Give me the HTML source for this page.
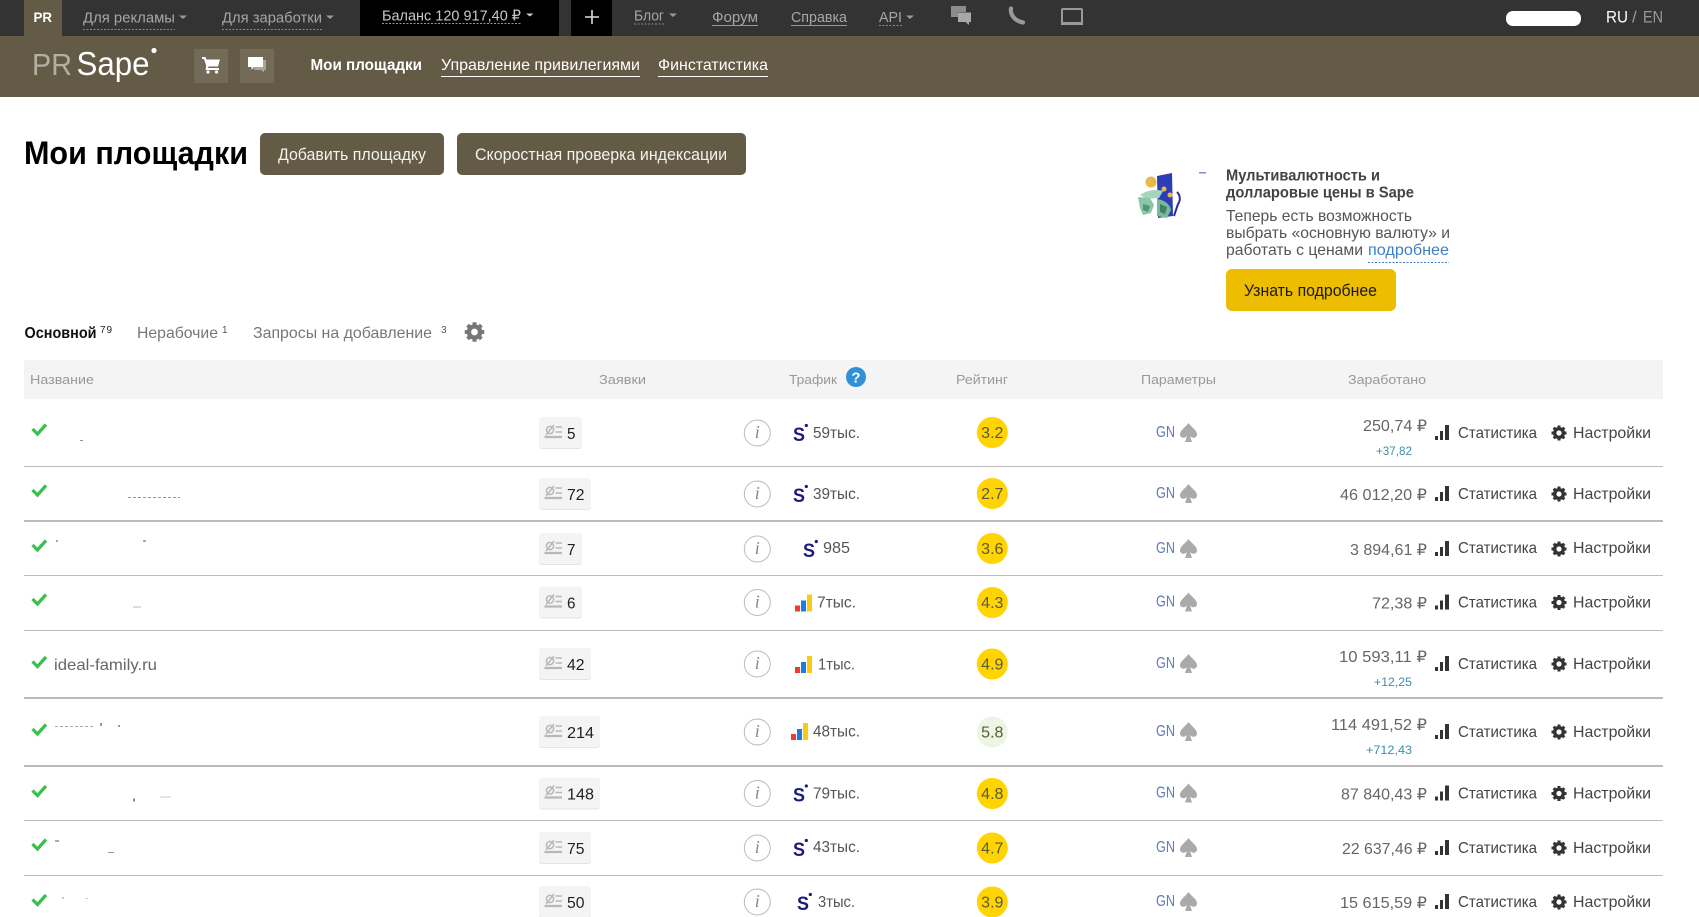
<!DOCTYPE html>
<html lang="ru"><head><meta charset="utf-8"><title>Мои площадки</title>
<style>
html,body{margin:0;padding:0;background:#fff;overflow:hidden}
svg{display:block}
text{font-family:"Liberation Sans","DejaVu Sans",sans-serif}
.n{font-size:15px;fill:#a6a6a6}
.nv{font-size:16px;fill:#fff}
.h{font-size:13px;fill:#999}
.t{font-size:16px;fill:#555}
.e{font-size:16px;fill:#666}
.a{font-size:16px;fill:#444}
.c{font-size:16px;fill:#222}
.g{font-size:16px;fill:#5f7cb8}
.r{font-size:16px;fill:#5a5a3c;text-anchor:middle}
.p{font-size:12px;fill:#3a8fa8}
.s{font-size:19px;font-weight:700;fill:#1b1a7a}
.i{font-size:18px;font-style:italic;fill:#888;font-family:"Liberation Serif",serif;text-anchor:middle}
</style></head><body>
<svg xmlns="http://www.w3.org/2000/svg" width="1699" height="917" viewBox="0 0 1699 917">
<defs>
<g id="chk"><path d="M32.500 6 L37.500 11 L46 1.500" fill="none" stroke="#38c04c" stroke-width="3.200"/></g>
<g id="req" fill="none" stroke="#b8b8b8"><circle cx="550" cy="-3" r="3.600" stroke-width="1.500"/><path d="M546 2 L554 -8" stroke-width="1.500"/><path d="M555.500 -6H562M555.500 -1H562" stroke-width="1.600"/><path d="M544.500 4H562" stroke-width="2.200"/></g>
<g id="inf"><circle cx="757.300" cy="0" r="13" fill="#fff" stroke="#bbb" stroke-width="1"/></g>
<path id="spd" d="M1188.500 -10 C1192 -5 1197 -3 1197 1.500 C1197 5 1192.500 6 1190 3 L1192 9 H1185 L1187 3 C1184.500 6 1180 5 1180 1.500 C1180 -3 1185 -5 1188.500 -10Z" fill="#aaa"/>
<g id="bar" fill="#333"><rect x="1435" y="3" width="3" height="4"/><rect x="1440" y="-2" width="3" height="9"/><rect x="1445" y="-8" width="4" height="15"/></g>
<g id="gr"><circle cx="0" cy="0" r="4.400" fill="none" stroke="#333" stroke-width="3.200"/><g fill="#333"><rect x="-1.500" y="-7.500" width="3" height="15"/><rect x="-1.500" y="-7.500" width="3" height="15" transform="rotate(45)"/><rect x="-1.500" y="-7.500" width="3" height="15" transform="rotate(90)"/><rect x="-1.500" y="-7.500" width="3" height="15" transform="rotate(135)"/></g><circle cx="0" cy="0" r="2.600" fill="#fff"/></g>
<g id="ya"><rect x="0" y="11" width="5" height="6" fill="#ef3b35"/><rect x="6" y="6" width="5" height="11" fill="#1f7be0"/><rect x="12" y="0" width="5" height="17" fill="#fdc912"/></g>
</defs>

<!-- top bar -->
<rect x="0" y="0" width="1699" height="36" fill="#333"/>
<rect x="0" y="36" width="1699" height="61" fill="#635b45"/>
<rect x="24" y="0" width="38" height="36" fill="#635b45"/>
<text x="33.500" y="22" font-size="14" font-weight="700" fill="#fff" textLength="18.500" lengthAdjust="spacingAndGlyphs">PR</text>
<text class="n" x="83" y="22.500" textLength="92" lengthAdjust="spacingAndGlyphs">Для рекламы</text>
<path d="M83 29.500H175" stroke="#888" stroke-dasharray="2 1.500"/>
<path d="M179 15.500h8l-4 3.500z" fill="#999"/>
<text class="n" x="222" y="22.500" textLength="100" lengthAdjust="spacingAndGlyphs">Для заработки</text>
<path d="M222 29.500H322" stroke="#888" stroke-dasharray="2 1.500"/>
<path d="M326 15.500h8l-4 3.500z" fill="#999"/>
<rect x="360" y="0" width="199" height="36" fill="#000"/>
<text x="382" y="20.500" font-size="15" fill="#c8c8c8" textLength="139" lengthAdjust="spacingAndGlyphs">Баланс 120 917,40 ₽</text>
<path d="M382 23.500H521" stroke="#999" stroke-dasharray="2 1.500"/>
<path d="M526 13.500h7.500l-3.700 3z" fill="#ccc"/>
<rect x="571" y="0" width="41" height="36" fill="#000"/>
<path d="M592 10V24M585 17H599" stroke="#ddd" stroke-width="1.600"/>
<text class="n" x="634" y="20.500" textLength="30" lengthAdjust="spacingAndGlyphs">Блог</text>
<path d="M634 24H664" stroke="#888" stroke-dasharray="2 1.500"/>
<path d="M669 13.500h8l-4 3.500z" fill="#999"/>
<text class="n" x="712" y="22" textLength="46" lengthAdjust="spacingAndGlyphs">Форум</text>
<path d="M712 25.500H758" stroke="#999"/>
<text class="n" x="791" y="22" textLength="56" lengthAdjust="spacingAndGlyphs">Справка</text>
<path d="M791 25.500H847" stroke="#999"/>
<text class="n" x="879" y="22" textLength="23" lengthAdjust="spacingAndGlyphs">API</text>
<path d="M879 25.500H902" stroke="#888" stroke-dasharray="2 1.500"/>
<path d="M906 15.500h8l-4 3.500z" fill="#999"/>
<path d="M951 6H966V12H958V17H951Z" fill="#8c8c8c"/>
<path d="M958 12.500H971V22H969V25L965.500 22H958Z" fill="#a8a8a8"/>
<path d="M1011 8.500C1010 15 1015 21 1023 22.500" fill="none" stroke="#999" stroke-width="4.200" stroke-linecap="round"/>
<rect x="1062" y="9" width="20" height="15" rx="1" fill="none" stroke="#999" stroke-width="2"/>
<rect x="1061" y="22" width="22" height="3" fill="#999"/>
<rect x="1506" y="11" width="75" height="15" rx="7" fill="#fff"/>
<text x="1606" y="22.500" font-size="17" fill="#fff" textLength="22" lengthAdjust="spacingAndGlyphs">RU</text>
<text x="1632" y="22.500" font-size="17" fill="#999" textLength="7">/</text>
<text x="1643" y="22.500" font-size="17" fill="#999" textLength="20" lengthAdjust="spacingAndGlyphs">EN</text>

<!-- brand bar -->
<text x="32" y="75" font-size="31" fill="#b2afa3" textLength="40" lengthAdjust="spacingAndGlyphs">PR</text>
<text x="76.500" y="75" font-size="33" fill="#fff" textLength="73" lengthAdjust="spacingAndGlyphs">Sape</text>
<circle cx="154" cy="50.500" r="2.600" fill="#fff"/>
<rect x="194" y="49" width="34" height="34" fill="#736b58"/>
<rect x="240" y="49" width="34" height="34" fill="#736b58"/>
<path d="M202 57H205.500L206.300 59.500H220L218 66.500H208.500L208 68H219V70H205.500L206.300 66L204 59H202Z" fill="#fff"/>
<circle cx="208" cy="72" r="1.600" fill="#fff"/><circle cx="216.500" cy="72" r="1.600" fill="#fff"/>
<path d="M254 60H266V70H264V72.500L261 70H254Z" fill="#a9a598"/>
<path d="M248 57H263V67H254L251.500 70V67H248Z" fill="#fff"/>
<text class="nv" x="310.500" y="70" font-weight="700" textLength="111.500" lengthAdjust="spacingAndGlyphs">Мои площадки</text>
<text class="nv" x="441" y="70" textLength="199" lengthAdjust="spacingAndGlyphs">Управление привилегиями</text>
<path d="M441 76.500H640" stroke="#fff"/>
<text class="nv" x="658" y="70" textLength="110" lengthAdjust="spacingAndGlyphs">Финстатистика</text>
<path d="M658 76.500H768" stroke="#fff"/>

<!-- heading -->
<text x="24" y="164" font-size="32" font-weight="700" fill="#000" textLength="224" lengthAdjust="spacingAndGlyphs">Мои площадки</text>
<rect x="260" y="133" width="184" height="42" rx="5" fill="#635b45"/>
<text x="278" y="160" font-size="17" fill="#f4f2ec" textLength="148" lengthAdjust="spacingAndGlyphs">Добавить площадку</text>
<rect x="457" y="133" width="289" height="42" rx="5" fill="#635b45"/>
<text x="475" y="160" font-size="17" fill="#f4f2ec" textLength="252" lengthAdjust="spacingAndGlyphs">Скоростная проверка индексации</text>

<!-- promo -->
<path d="M1157 176L1172 173L1173 216L1158 218Z" fill="#2c3db8"/>
<circle cx="1151" cy="182" r="5.500" fill="#e9b948"/>
<circle cx="1164" cy="189" r="2.500" fill="#e9b948"/><circle cx="1170" cy="195" r="2.500" fill="#e9b948"/>
<path d="M1140 195C1147 190 1156 189 1163 191L1159 198L1147 199Z" fill="#a6d5be"/>
<path d="M1138 197L1150 198L1154 205L1151 213L1143 215L1140 208Z" fill="#8cc6aa"/>
<path d="M1143 204L1150 206L1148 212L1143 210Z" fill="#4f9478"/>
<path d="M1157 199C1164 200 1170 204 1171 210L1167 218L1157 216Z" fill="#79b89b"/>
<path d="M1160 204L1167 207L1165 214L1160 212Z" fill="#3f8066"/>
<path d="M1177 192C1180 195 1181 200 1178 204L1174 216" fill="none" stroke="#2a2f9a" stroke-width="2"/>
<rect x="1199" y="172" width="7" height="1.500" fill="#8a8fc0"/>
<text x="1226" y="180.500" font-size="16" font-weight="700" fill="#444" textLength="154" lengthAdjust="spacingAndGlyphs">Мультивалютность и</text>
<text x="1226" y="197.500" font-size="16" font-weight="700" fill="#444" textLength="188" lengthAdjust="spacingAndGlyphs">долларовые цены в Sape</text>
<text x="1226" y="221" font-size="16" fill="#555" textLength="186" lengthAdjust="spacingAndGlyphs">Теперь есть возможность</text>
<text x="1226" y="238" font-size="16" fill="#555" textLength="224" lengthAdjust="spacingAndGlyphs">выбрать «основную валюту» и</text>
<text x="1226" y="255" font-size="16" fill="#555" textLength="137" lengthAdjust="spacingAndGlyphs">работать с ценами</text>
<text x="1368" y="255" font-size="16" fill="#3d7fc4" textLength="81" lengthAdjust="spacingAndGlyphs">подробнее</text>
<path d="M1368 262.500H1449" stroke="#3d7fc4" stroke-dasharray="2 1.500"/>
<rect x="1226" y="269" width="170" height="42" rx="6" fill="#ecbd00"/>
<text x="1244" y="296" font-size="17" fill="#1c1a10" textLength="133" lengthAdjust="spacingAndGlyphs">Узнать подробнее</text>

<!-- tabs -->
<text x="24.500" y="338" font-size="16" font-weight="700" fill="#111" textLength="72" lengthAdjust="spacingAndGlyphs">Основной</text>
<text x="100" y="333" font-size="10" fill="#222" textLength="12">79</text>
<text x="137" y="338" font-size="16" fill="#777" textLength="81" lengthAdjust="spacingAndGlyphs">Нерабочие</text>
<text x="222" y="333" font-size="10" fill="#555">1</text>
<text x="253" y="338" font-size="16" fill="#777" textLength="179" lengthAdjust="spacingAndGlyphs">Запросы на добавление</text>
<text x="441" y="333" font-size="10" fill="#555">3</text>
<g transform="translate(474.500,332) scale(1.300)"><circle r="4.400" fill="none" stroke="#777" stroke-width="3.200"/><g fill="#777"><rect x="-1.500" y="-7.500" width="3" height="15"/><rect x="-1.500" y="-7.500" width="3" height="15" transform="rotate(45)"/><rect x="-1.500" y="-7.500" width="3" height="15" transform="rotate(90)"/><rect x="-1.500" y="-7.500" width="3" height="15" transform="rotate(135)"/></g><circle r="2.600" fill="#fff"/></g>

<!-- table head -->
<rect x="24" y="360" width="1639" height="39" fill="#f4f4f4"/>
<text class="h" x="30" y="384" textLength="64" lengthAdjust="spacingAndGlyphs">Название</text>
<text class="h" x="599" y="384" textLength="47" lengthAdjust="spacingAndGlyphs">Заявки</text>
<text class="h" x="789" y="384" textLength="48" lengthAdjust="spacingAndGlyphs">Трафик</text>
<circle cx="856" cy="377" r="10" fill="#3290d6"/>
<text x="856" y="382.500" font-size="15" font-weight="700" fill="#fff" text-anchor="middle">?</text>
<text class="h" x="956" y="384" textLength="52" lengthAdjust="spacingAndGlyphs">Рейтинг</text>
<text class="h" x="1141" y="384" textLength="75" lengthAdjust="spacingAndGlyphs">Параметры</text>
<text class="h" x="1348" y="384" textLength="78" lengthAdjust="spacingAndGlyphs">Заработано</text>

<!-- separators -->
<g fill="#bbb">
<rect x="24" y="466" width="1639" height="1"/>
<rect x="24" y="520" width="1639" height="2"/>
<rect x="24" y="575" width="1639" height="1"/>
<rect x="24" y="630" width="1639" height="1"/>
<rect x="24" y="697" width="1639" height="2"/>
<rect x="24" y="765" width="1639" height="2"/>
<rect x="24" y="820" width="1639" height="1"/>
<rect x="24" y="875" width="1639" height="1"/>
</g>

<!-- row 1 -->
<g transform="translate(0,433)">
<use href="#chk" y="-10"/><rect x="80" y="7" width="3" height="1" fill="#999"/>
<rect x="539" y="-15" width="43" height="31" rx="3" fill="#e4e4e4"/><rect x="539" y="-16" width="43" height="31" rx="3" fill="#f4f4f4"/><use href="#req"/>
<text class="c" x="567" y="6" textLength="8.500" lengthAdjust="spacingAndGlyphs">5</text>
<use href="#inf"/><text class="i" x="757.300" y="5">i</text>
<text class="s" x="793" y="8" textLength="12" lengthAdjust="spacingAndGlyphs">S</text><circle cx="806.300" cy="-7.500" r="1.600" fill="#1b1a7a"/>
<text class="t" x="813" y="5" textLength="47" lengthAdjust="spacingAndGlyphs">59тыс.</text>
<circle cx="992.300" cy="-.5" r="15.500" fill="#ffd400"/><text class="r" x="992.300" y="5">3.2</text>
<text class="g" x="1156" y="4" textLength="19" lengthAdjust="spacingAndGlyphs">GN</text><use href="#spd"/>
<text class="e" x="1363" y="-2" textLength="64" lengthAdjust="spacingAndGlyphs">250,74 ₽</text>
<text class="p" x="1376" y="22" textLength="36" lengthAdjust="spacingAndGlyphs">+37,82</text>
<use href="#bar"/><text class="a" x="1458" y="5" textLength="79" lengthAdjust="spacingAndGlyphs">Статистика</text>
<use href="#gr" x="1559"/><text class="a" x="1573" y="5" textLength="78" lengthAdjust="spacingAndGlyphs">Настройки</text>
</g>
<!-- row 2 -->
<g transform="translate(0,494)">
<use href="#chk" y="-10"/><path d="M128 3.500H180" stroke="#999" stroke-dasharray="3 2"/>
<rect x="539" y="-15" width="52" height="31" rx="3" fill="#e4e4e4"/><rect x="539" y="-16" width="52" height="31" rx="3" fill="#f4f4f4"/><use href="#req"/>
<text class="c" x="567" y="6" textLength="17.500" lengthAdjust="spacingAndGlyphs">72</text>
<use href="#inf"/><text class="i" x="757.300" y="5">i</text>
<text class="s" x="793" y="8" textLength="12" lengthAdjust="spacingAndGlyphs">S</text><circle cx="806.300" cy="-7.500" r="1.600" fill="#1b1a7a"/>
<text class="t" x="813" y="5" textLength="47" lengthAdjust="spacingAndGlyphs">39тыс.</text>
<circle cx="992.300" cy="-.5" r="15.500" fill="#ffd400"/><text class="r" x="992.300" y="5">2.7</text>
<text class="g" x="1156" y="4" textLength="19" lengthAdjust="spacingAndGlyphs">GN</text><use href="#spd"/>
<text class="e" x="1340" y="6" textLength="87" lengthAdjust="spacingAndGlyphs">46 012,20 ₽</text>
<use href="#bar"/><text class="a" x="1458" y="5" textLength="79" lengthAdjust="spacingAndGlyphs">Статистика</text>
<use href="#gr" x="1559"/><text class="a" x="1573" y="5" textLength="78" lengthAdjust="spacingAndGlyphs">Настройки</text>
</g>
<!-- row 3 -->
<g transform="translate(0,549)">
<use href="#chk" y="-10"/><rect x="56" y="-9" width="2" height="2" fill="#aaa"/><rect x="143" y="-9" width="3" height="2" fill="#aaa"/>
<rect x="539" y="-15" width="43" height="31" rx="3" fill="#e4e4e4"/><rect x="539" y="-16" width="43" height="31" rx="3" fill="#f4f4f4"/><use href="#req"/>
<text class="c" x="567" y="6" textLength="8.500" lengthAdjust="spacingAndGlyphs">7</text>
<use href="#inf"/><text class="i" x="757.300" y="5">i</text>
<text class="s" x="803" y="8" textLength="12" lengthAdjust="spacingAndGlyphs">S</text><circle cx="816.300" cy="-7.500" r="1.600" fill="#1b1a7a"/>
<text class="t" x="823" y="4" textLength="27" lengthAdjust="spacingAndGlyphs">985</text>
<circle cx="992.300" cy="-.5" r="15.500" fill="#ffd400"/><text class="r" x="992.300" y="5">3.6</text>
<text class="g" x="1156" y="4" textLength="19" lengthAdjust="spacingAndGlyphs">GN</text><use href="#spd"/>
<text class="e" x="1350" y="6" textLength="77" lengthAdjust="spacingAndGlyphs">3 894,61 ₽</text>
<use href="#bar"/><text class="a" x="1458" y="4" textLength="79" lengthAdjust="spacingAndGlyphs">Статистика</text>
<use href="#gr" x="1559"/><text class="a" x="1573" y="4" textLength="78" lengthAdjust="spacingAndGlyphs">Настройки</text>
</g>
<!-- row 4 -->
<g transform="translate(0,602.500)">
<use href="#chk" y="-9.500"/><rect x="133" y="4" width="8" height="1" fill="#bbb"/>
<rect x="539" y="-15" width="43" height="31" rx="3" fill="#e4e4e4"/><rect x="539" y="-16" width="43" height="31" rx="3" fill="#f4f4f4"/><use href="#req"/>
<text class="c" x="567" y="6" textLength="8.500" lengthAdjust="spacingAndGlyphs">6</text>
<use href="#inf"/><text class="i" x="757.300" y="5">i</text>
<use href="#ya" x="795" y="-8"/>
<text class="t" x="817" y="5" textLength="39" lengthAdjust="spacingAndGlyphs">7тыс.</text>
<circle cx="992.300" r="15.500" fill="#ffd400"/><text class="r" x="992.300" y="5.500">4.3</text>
<text class="g" x="1156" y="4" textLength="19" lengthAdjust="spacingAndGlyphs">GN</text><use href="#spd"/>
<text class="e" x="1372" y="6" textLength="55" lengthAdjust="spacingAndGlyphs">72,38 ₽</text>
<use href="#bar"/><text class="a" x="1458" y="5" textLength="79" lengthAdjust="spacingAndGlyphs">Статистика</text>
<use href="#gr" x="1559"/><text class="a" x="1573" y="5" textLength="78" lengthAdjust="spacingAndGlyphs">Настройки</text>
</g>
<!-- row 5 -->
<g transform="translate(0,664)">
<use href="#chk" y="-8.500"/>
<text x="54" y="6" font-size="16" fill="#666" textLength="103" lengthAdjust="spacingAndGlyphs">ideal-family.ru</text>
<rect x="539" y="-15" width="52" height="31" rx="3" fill="#e4e4e4"/><rect x="539" y="-16" width="52" height="31" rx="3" fill="#f4f4f4"/><use href="#req"/>
<text class="c" x="567" y="6" textLength="17.500" lengthAdjust="spacingAndGlyphs">42</text>
<use href="#inf"/><text class="i" x="757.300" y="5">i</text>
<use href="#ya" x="795" y="-8"/>
<text class="t" x="818" y="5.500" textLength="37" lengthAdjust="spacingAndGlyphs">1тыс.</text>
<circle cx="992.300" r="15.500" fill="#ffd400"/><text class="r" x="992.300" y="5.500">4.9</text>
<text class="g" x="1156" y="4" textLength="19" lengthAdjust="spacingAndGlyphs">GN</text><use href="#spd"/>
<text class="e" x="1339" y="-2" textLength="88" lengthAdjust="spacingAndGlyphs">10 593,11 ₽</text>
<text class="p" x="1374" y="22" textLength="38" lengthAdjust="spacingAndGlyphs">+12,25</text>
<use href="#bar"/><text class="a" x="1458" y="5" textLength="79" lengthAdjust="spacingAndGlyphs">Статистика</text>
<use href="#gr" x="1559"/><text class="a" x="1573" y="5" textLength="78" lengthAdjust="spacingAndGlyphs">Настройки</text>
</g>
<!-- row 6 -->
<g transform="translate(0,732)">
<use href="#chk" y="-9"/><path d="M55 -5.500H93" stroke="#aaa" stroke-dasharray="3 2"/><rect x="100" y="-9" width="2" height="3" fill="#999"/><rect x="118" y="-7" width="2" height="2" fill="#999"/>
<rect x="539" y="-15" width="61" height="31" rx="3" fill="#e4e4e4"/><rect x="539" y="-16" width="61" height="31" rx="3" fill="#f4f4f4"/><use href="#req"/>
<text class="c" x="567" y="6" textLength="27" lengthAdjust="spacingAndGlyphs">214</text>
<use href="#inf"/><text class="i" x="757.300" y="5">i</text>
<use href="#ya" x="791" y="-9"/>
<text class="t" x="813" y="4.500" textLength="47" lengthAdjust="spacingAndGlyphs">48тыс.</text>
<circle cx="992.300" r="15.500" fill="#ecf6e2"/><text class="r" x="992.300" y="5.500">5.8</text>
<text class="g" x="1156" y="4" textLength="19" lengthAdjust="spacingAndGlyphs">GN</text><use href="#spd"/>
<text class="e" x="1331" y="-2" textLength="96" lengthAdjust="spacingAndGlyphs">114 491,52 ₽</text>
<text class="p" x="1366" y="22" textLength="46" lengthAdjust="spacingAndGlyphs">+712,43</text>
<use href="#bar"/><text class="a" x="1458" y="5" textLength="79" lengthAdjust="spacingAndGlyphs">Статистика</text>
<use href="#gr" x="1559"/><text class="a" x="1573" y="5" textLength="78" lengthAdjust="spacingAndGlyphs">Настройки</text>
</g>
<!-- row 7 -->
<g transform="translate(0,793.500)">
<use href="#chk" y="-9"/><rect x="133" y="5" width="2" height="3" fill="#888"/><rect x="160" y="3" width="11" height="1" fill="#ccc"/>
<rect x="539" y="-15" width="61" height="31" rx="3" fill="#e4e4e4"/><rect x="539" y="-16" width="61" height="31" rx="3" fill="#f4f4f4"/><use href="#req"/>
<text class="c" x="567" y="6" textLength="27" lengthAdjust="spacingAndGlyphs">148</text>
<use href="#inf"/><text class="i" x="757.300" y="5">i</text>
<text class="s" x="793" y="8" textLength="12" lengthAdjust="spacingAndGlyphs">S</text><circle cx="806.300" cy="-7.500" r="1.600" fill="#1b1a7a"/>
<text class="t" x="813" y="5" textLength="47" lengthAdjust="spacingAndGlyphs">79тыс.</text>
<circle cx="992.300" r="15.500" fill="#ffd400"/><text class="r" x="992.300" y="5.500">4.8</text>
<text class="g" x="1156" y="4" textLength="19" lengthAdjust="spacingAndGlyphs">GN</text><use href="#spd"/>
<text class="e" x="1341" y="6" textLength="86" lengthAdjust="spacingAndGlyphs">87 840,43 ₽</text>
<use href="#bar"/><text class="a" x="1458" y="5" textLength="79" lengthAdjust="spacingAndGlyphs">Статистика</text>
<use href="#gr" x="1559"/><text class="a" x="1573" y="5" textLength="78" lengthAdjust="spacingAndGlyphs">Настройки</text>
</g>
<!-- row 8 -->
<g transform="translate(0,848)">
<use href="#chk" y="-10"/><rect x="55" y="-8" width="4" height="2" fill="#aaa"/><rect x="108" y="4" width="6" height="1" fill="#999"/>
<rect x="539" y="-15" width="52" height="31" rx="3" fill="#e4e4e4"/><rect x="539" y="-16" width="52" height="31" rx="3" fill="#f4f4f4"/><use href="#req"/>
<text class="c" x="567" y="6" textLength="17.500" lengthAdjust="spacingAndGlyphs">75</text>
<use href="#inf"/><text class="i" x="757.300" y="5">i</text>
<text class="s" x="793" y="8" textLength="12" lengthAdjust="spacingAndGlyphs">S</text><circle cx="806.300" cy="-7.500" r="1.600" fill="#1b1a7a"/>
<text class="t" x="813" y="4" textLength="47" lengthAdjust="spacingAndGlyphs">43тыс.</text>
<circle cx="992.300" r="15.500" fill="#ffd400"/><text class="r" x="992.300" y="5.500">4.7</text>
<text class="g" x="1156" y="4" textLength="19" lengthAdjust="spacingAndGlyphs">GN</text><use href="#spd"/>
<text class="e" x="1342" y="6" textLength="85" lengthAdjust="spacingAndGlyphs">22 637,46 ₽</text>
<use href="#bar"/><text class="a" x="1458" y="5" textLength="79" lengthAdjust="spacingAndGlyphs">Статистика</text>
<use href="#gr" x="1559"/><text class="a" x="1573" y="5" textLength="78" lengthAdjust="spacingAndGlyphs">Настройки</text>
</g>
<!-- row 9 -->
<g transform="translate(0,902)">
<use href="#chk" y="-8.500"/><rect x="62" y="-5" width="2" height="2" fill="#ccc"/><rect x="85" y="-4" width="3" height="1" fill="#ccc"/>
<rect x="539" y="-15" width="52" height="31" rx="3" fill="#e4e4e4"/><rect x="539" y="-16" width="52" height="31" rx="3" fill="#f4f4f4"/><use href="#req"/>
<text class="c" x="567" y="6" textLength="17.500" lengthAdjust="spacingAndGlyphs">50</text>
<use href="#inf"/><text class="i" x="757.300" y="5">i</text>
<text class="s" x="797" y="8" textLength="12" lengthAdjust="spacingAndGlyphs">S</text><circle cx="810.300" cy="-7.500" r="1.600" fill="#1b1a7a"/>
<text class="t" x="818" y="5" textLength="37" lengthAdjust="spacingAndGlyphs">3тыс.</text>
<circle cx="992.300" r="15.500" fill="#ffd400"/><text class="r" x="992.300" y="5.500">3.9</text>
<text class="g" x="1156" y="4" textLength="19" lengthAdjust="spacingAndGlyphs">GN</text><use href="#spd"/>
<text class="e" x="1340" y="6" textLength="87" lengthAdjust="spacingAndGlyphs">15 615,59 ₽</text>
<use href="#bar"/><text class="a" x="1458" y="5" textLength="79" lengthAdjust="spacingAndGlyphs">Статистика</text>
<use href="#gr" x="1559"/><text class="a" x="1573" y="5" textLength="78" lengthAdjust="spacingAndGlyphs">Настройки</text>
</g>
</svg>
</body></html>
